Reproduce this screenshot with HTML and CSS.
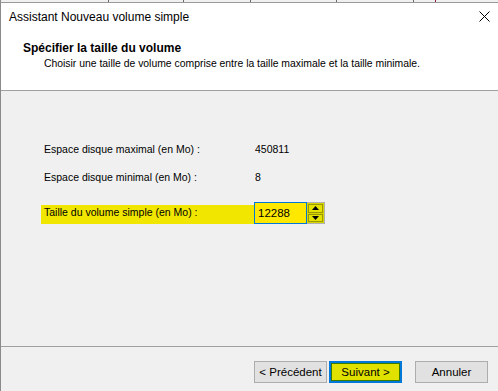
FILE: index.html
```html
<!DOCTYPE html>
<html lang="fr">
<head>
  <meta charset="UTF-8">
  <title>Assistant Nouveau volume simple</title>
  <link rel="stylesheet" href="styles.css">
</head>
<body>
  <div class="desk-strip">
    <span class="tick t1"></span>
    <span class="tick t2"></span>
    <span class="tick t3"></span>
    <span class="tick t4"></span>
    <span class="tick t5"></span>
    <span class="tick t6 red"></span>
  </div>

  <div class="window">
    <div class="titlebar">
      <span class="title">Assistant Nouveau volume simple</span>
      <svg class="close" width="11" height="11" viewBox="0 0 11 11">
        <path d="M0.5 0.5 L10.5 10.5 M10.5 0.5 L0.5 10.5" stroke="#000" stroke-width="1" fill="none"/>
      </svg>
    </div>

    <div class="header">
      <div class="heading">Spécifier la taille du volume</div>
      <div class="subheading">Choisir une taille de volume comprise entre la taille maximale et la taille minimale.</div>
    </div>

    <div class="content">
      <div class="form">
        <div class="label">Espace disque maximal (en Mo) :</div>
        <div class="value">450811</div>

        <div class="label">Espace disque minimal (en Mo) :</div>
        <div class="value">8</div>

        <div class="label highlight">Taille du volume simple (en Mo) :</div>
        <div class="spin-wrap">
          <div class="spin-input">12288</div>
          <div class="spin-buttons">
            <div class="spin-btn">
              <svg width="7" height="4" viewBox="0 0 7 4"><path d="M3.5 0 L7 4 L0 4 Z" fill="#000"/></svg>
            </div>
            <div class="spin-btn">
              <svg width="7" height="4" viewBox="0 0 7 4"><path d="M0 0 L7 0 L3.5 4 Z" fill="#000"/></svg>
            </div>
          </div>
        </div>
      </div>
    </div>

    <div class="footer">
      <button class="btn">&lt; Précédent</button>
      <button class="btn primary">Suivant &gt;</button>
      <button class="btn cancel">Annuler</button>
    </div>
  </div>
</body>
</html>
```

FILE: styles.css
```css
body {
  margin: 0;
  background-color: #f0f0f0;
  font-family: 'Liberation Sans', Arial, sans-serif;
  color: #000;
  overflow: hidden;
}

.desk-strip {
  position: relative;
  height: 2px;
  background-color: #f0f0f0;
  border-left: 1px solid #8a8a8a;
}

.tick {
  position: absolute;
  top: 0;
  width: 1px;
  height: 2px;
  background-color: #6a6a6a;
}

.tick.t1 { left: 107px; }
.tick.t2 { left: 182px; }
.tick.t3 { left: 249px; }
.tick.t4 { left: 335px; }
.tick.t5 { left: 412px; }
.tick.t6 { left: 434px; }
.tick.red { background-color: #8b1a3a; }

.window {
  border-left: 1px solid #8a8a8a;
  border-top: 1px solid #9a9a9a;
  height: 389px;
  display: flex;
  flex-direction: column;
  box-sizing: border-box;
}

.titlebar {
  height: 27px;
  background-color: #fff;
  display: flex;
  align-items: center;
  justify-content: space-between;
  padding: 0 8px 0 8px;
  font-size: 12px;
}

.title {
  padding-top: 1px;
}

.header {
  height: 61px;
  background-color: #fff;
  border-bottom: 1px solid #a0a0a0;
  padding: 11px 0 0 22px;
  box-sizing: border-box;
  font-size: 10.4px;
}

.heading {
  font-weight: bold;
  font-size: 12px;
  line-height: 15px;
}

.subheading {
  padding-left: 21px;
  margin-top: 1px;
  line-height: 14px;
}

.content {
  flex: 1;
  padding: 52px 0 0 40px;
  font-size: 10.5px;
  border-bottom: 1px solid #a0a0a0;
}

.form {
  display: grid;
  grid-template-columns: 213px auto;
  row-gap: 15px;
  align-items: start;
}

.label,
.value {
  line-height: 13px;
  padding-left: 3px;
}

.value {
  padding-left: 1px;
}

.highlight {
  background-color: #f0e600;
  height: 19px;
  padding-top: 1px;
  box-sizing: border-box;
  margin-top: 6px;
}

.spin-wrap {
  display: flex;
  width: 71px;
  height: 22px;
  margin-top: 3px;
}

.spin-input {
  width: 53px;
  border: 1px solid #0078d7;
  background-color: #ffe800;
  box-sizing: border-box;
  padding: 4px 0 0 3px;
  font-size: 11.5px;
  line-height: 13px;
}

.spin-buttons {
  width: 18px;
  border: 1px solid #b0b0b0;
  border-left: none;
  background-color: #d8d400;
  box-sizing: border-box;
  display: flex;
  flex-direction: column;
  justify-content: center;
  gap: 1px;
  padding: 1px;
}

.spin-btn {
  height: 8px;
  border: 1px solid #9a9a00;
  background-color: #e6e200;
  display: flex;
  align-items: center;
  justify-content: center;
}

.footer {
  height: 44px;
  display: flex;
  align-items: flex-start;
  padding: 14px 0 0 253px;
  box-sizing: border-box;
}

.btn {
  width: 73px;
  height: 22px;
  font-family: 'Liberation Sans', Arial, sans-serif;
  font-size: 11.5px;
  color: #000;
  background-color: #e1e1e1;
  border: 1px solid #adadad;
  padding: 0;
  margin: 0;
}

.btn.primary {
  margin-left: 2px;
  background-color: #e1e100;
  border: 2px solid #0078d7;
  box-shadow: inset 0 0 0 1px #3a7a00;
}

.btn.cancel {
  margin-left: 13px;
}
```
